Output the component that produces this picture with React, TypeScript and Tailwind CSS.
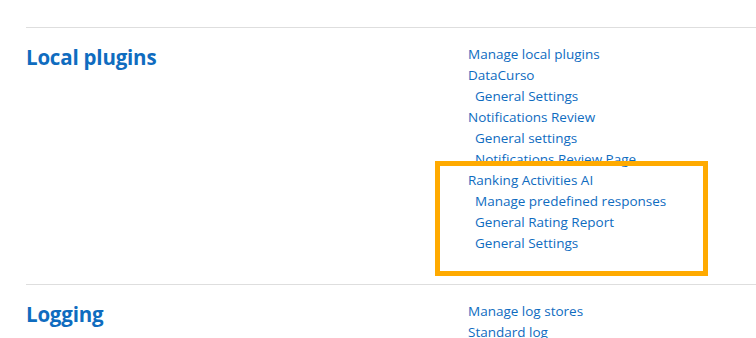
import React from "react";

const font = { fontFamily: '"Segoe UI", "Open Sans", "Liberation Sans", sans-serif' };

function Item({ text, sub }: { text: string; sub?: boolean }) {
  return (
    <li className={`text-[13.5px] leading-[21px] whitespace-nowrap ${sub ? "pl-[7px]" : ""}`}>
      <a className="text-[#0f6cbf]">{text}</a>
    </li>
  );
}

export default function App() {
  return (
    <div className="relative w-[756px] h-[338px] overflow-hidden bg-white" style={font}>
      <div className="pl-[26px] pt-[27px]">
        <section className="flex border-t border-[#dedede] pt-[16px] pb-[30px]">
          <h3 className="w-[442px] shrink-0 text-[20.5px] leading-[26px] font-bold tracking-[-0.2px] text-[#0f6cbf]">Local plugins</h3>
          <ul>
            <Item text="Manage local plugins" />
            <Item text="DataCurso" />
            <Item text="General Settings" sub />
            <Item text="Notifications Review" />
            <Item text="General settings" sub />
            <Item text="Notifications Review Page" sub />
            <Item text="Ranking Activities AI" />
            <Item text="Manage predefined responses" sub />
            <Item text="General Rating Report" sub />
            <Item text="General Settings" sub />
          </ul>
        </section>
        <section className="flex border-t border-[#dedede] pt-[16px]">
          <h3 className="w-[442px] shrink-0 text-[20.5px] leading-[26px] font-bold tracking-[-0.2px] text-[#0f6cbf]">Logging</h3>
          <ul>
            <Item text="Manage log stores" />
            <Item text="Standard log" />
          </ul>
        </section>
      </div>
      <div className="absolute left-[435px] top-[161px] w-[273px] h-[115px] border-[5px] border-[#ffaa00]" />
    </div>
  );
}
